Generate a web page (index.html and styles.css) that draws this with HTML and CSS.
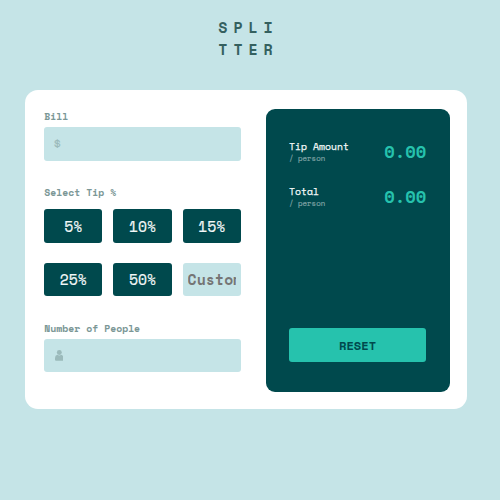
FILE: index.html
```html
<!DOCTYPE html>
<html lang="en">
<head>
<meta charset="utf-8">
<title>Splitter</title>
<link rel="stylesheet" href="styles.css">
</head>
<body>
<h1 class="logo">SPLI<br>TTER</h1>
<main class="card">
  <form class="form">
    <label class="label" for="bill">Bill</label>
    <div class="field"><span class="dollar">$</span><input id="bill" class="entry" type="text"></div>
    <div class="label label-tip">Select Tip %</div>
    <div class="tips">
      <button type="button" class="tip">5%</button>
      <button type="button" class="tip">10%</button>
      <button type="button" class="tip">15%</button>
      <button type="button" class="tip">25%</button>
      <button type="button" class="tip">50%</button>
      <input class="custom" type="text" placeholder="Custom">
    </div>
    <label class="label label-people" for="people">Number of People</label>
    <div class="field">
      <svg class="person" viewBox="0 0 8 10"><circle cx="4" cy="2.3" r="2.3"/><path d="M2.2 4.5Q4 5.8 5.8 4.5Q8 5 8 7.5V9Q8 10 7 10H1Q0 10 0 9V7.5Q0 5 2.2 4.5Z"/></svg>
      <input id="people" class="entry" type="text">
    </div>
  </form>
  <section class="panel">
    <div class="result">
      <div><div class="name">Tip Amount</div><div class="unit">/ person</div></div>
      <div class="amount">0.00</div>
    </div>
    <div class="result">
      <div><div class="name">Total</div><div class="unit">/ person</div></div>
      <div class="amount">0.00</div>
    </div>
    <button type="button" class="reset">RESET</button>
  </section>
</main>
</body>
</html>
```
FILE: styles.css
```css
* { box-sizing: border-box; }
body {
  margin: 0;
  height: 500px;
  overflow: hidden;
  background: #c5e4e7;
  font-family: "Space Mono", "Liberation Mono", monospace;
}
button, input { font: inherit; border: 0; margin: 0; padding: 0; }
.logo {
  margin: 0;
  padding: 16px 0 0 218.3px;
  height: 89.6px;
  font-size: 15px;
  line-height: 22px;
  letter-spacing: 5.9px;
  color: #34605f;
}
.card {
  display: flex;
  justify-content: space-between;
  width: 442px;
  height: 319.8px;
  margin-left: 24.8px;
  padding: 19.6px 17.2px 17.5px 19.4px;
  background: #fff;
  border-radius: 13px;
}
.form { width: 196.6px; }
.label {
  display: block;
  height: 18px;
  font-size: 9.8px;
  line-height: 15px;
  font-weight: 700;
  color: #7b9796;
}
.label-tip { margin-top: 24px; height: 24.5px; }
.label-people { margin-top: 24.6px; }
.field {
  display: flex;
  align-items: center;
  height: 33.4px;
  padding-left: 10px;
  background: #c5e4e7;
  border-radius: 3px;
}
.dollar {
  width: 9px;
  padding-bottom: 2px;
  font-size: 12px;
  color: #9bbabb;
  transform: scale(1.2);
}
.person { width: 8.6px; height: 10.8px; margin: 0 0 1px 0.5px; fill: #9bbabb; }
.entry { flex: 1; min-width: 0; background: transparent; }
.tips {
  display: grid;
  grid-template-columns: repeat(3, 58.2px);
  grid-auto-rows: 33.8px;
  justify-content: space-between;
  row-gap: 19.7px;
}
.tip {
  padding-top: 1px;
  background: #00494d;
  color: #f3f8f8;
  border-radius: 3px;
  font-size: 14.7px;
  -webkit-text-stroke: 0.2px #f3f8f8;
}
.custom {
  width: 58.2px;
  padding: 0 5px;
  background: #c5e4e7;
  border-radius: 3px;
  font-size: 14.7px;
  font-weight: 700;
  letter-spacing: 0.15px;
}
.custom::placeholder { color: #757575; opacity: 1; }
.panel {
  display: flex;
  flex-direction: column;
  width: 184px;
  height: 282.6px;
  padding: 29.5px 23.4px 29.8px;
  background: #00494d;
  border-radius: 9px;
}
.result {
  display: flex;
  justify-content: space-between;
  height: 45px;
}
.name {
  font-size: 9.8px;
  line-height: 15px;
  color: #f3f8f8;
  -webkit-text-stroke: 0.25px #f3f8f8;
}
.unit {
  font-size: 7.4px;
  line-height: 10px;
  color: #7fa2a4;
  -webkit-text-stroke: 0.2px #7fa2a4;
}
.amount {
  padding-top: 1px;
  font-size: 17.2px;
  line-height: 24px;
  font-weight: 700;
  color: #26c2ad;
}
.reset {
  height: 33.8px;
  margin-top: auto;
  background: #26c2ad;
  color: #00494d;
  border-radius: 3px;
  font-size: 12.2px;
  line-height: 16px;
  padding-bottom: 1px;
  font-weight: 700;
}
```
